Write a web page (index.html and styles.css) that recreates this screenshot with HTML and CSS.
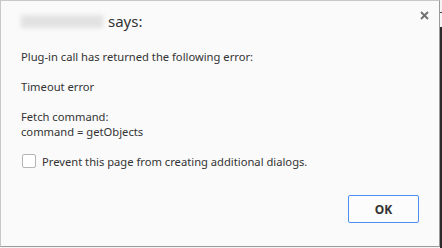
FILE: index.html
```html
<!DOCTYPE html>
<html>
<head>
<meta charset="utf-8">
<link rel="stylesheet" href="styles.css">
</head>
<body>
<div class="screen">
  <div class="dialog">
    <div class="title-row">
      <span class="origin" aria-hidden="true"></span>
      <span class="says">says:</span>
      <button class="close" aria-label="Close">
        <svg width="9" height="9" viewBox="0 0 9 9"><path d="M1 1 L8 8 M8 1 L1 8" stroke="#707070" stroke-width="1.9" fill="none"/></svg>
      </button>
    </div>
    <div class="message">
      <p class="line">Plug-in call has returned the following error:</p>
      <p class="line gap">Timeout error</p>
      <p class="line gap">Fetch command:</p>
      <p class="line">command = getObjects</p>
    </div>
    <label class="check-row">
      <span class="box"></span>
      <span class="check-label">Prevent this page from creating additional dialogs.</span>
    </label>
    <div class="actions">
      <button class="ok">OK</button>
    </div>
  </div>
  <div class="side"><span class="side-mark"></span></div>
</div>
</body>
</html>
```
FILE: styles.css
```css
html, body {
  margin: 0;
  padding: 0;
  background: #f4f4f4;
}
.screen {
  display: flex;
  width: 442px;
  height: 248px;
  overflow: hidden;
}
.dialog {
  box-sizing: border-box;
  width: 440px;
  height: 247px;
  background: #fafafa;
  border: 1px solid #9a9a9a;
  border-top-color: #c8c8c8;
  border-left-color: #c8c8c8;
  padding: 9px 20px 0 19px;
  font-family: "Noto Sans", "Open Sans", sans-serif;
  color: #333;
  display: flex;
  flex-direction: column;
}
.side {
  width: 2px;
  height: 248px;
  background: linear-gradient(#f4f4f4 0, #f4f4f4 27px, #2b2b2b 27px);
  position: relative;
}
.side-mark {
  position: absolute;
  left: 0;
  top: 12px;
  width: 2px;
  height: 1px;
  background: #444;
}
.title-row {
  display: flex;
  align-items: center;
  height: 22px;
  position: relative;
}
.origin {
  display: inline-block;
  width: 82px;
  height: 13px;
  margin: 0 5px 0 1px;
  background: #e2e2e2;
  filter: blur(2px);
}
.says {
  font-size: 15px;
  line-height: 22px;
  color: #333;
}
.close {
  position: absolute;
  right: -12px;
  top: -2px;
  width: 14px;
  height: 14px;
  padding: 0;
  border: 0;
  background: none;
  display: flex;
  align-items: center;
  justify-content: center;
}
.message {
  margin-top: 17px;
  padding-left: 1px;
}
.line {
  margin: 0;
  font-size: 11.2px;
  line-height: 15px;
}
.gap {
  margin-top: 15px;
}
.check-row {
  display: flex;
  align-items: center;
  margin-top: 14px;
  height: 16px;
  padding-left: 2px;
}
.box {
  box-sizing: border-box;
  width: 14px;
  height: 14px;
  border: 1px solid #b5b5b5;
  border-radius: 2px;
  background: #fff;
}
.check-label {
  margin-left: 6px;
  font-size: 11.2px;
  line-height: 15px;
}
.actions {
  display: flex;
  justify-content: flex-end;
  margin-top: 26px;
}
.ok {
  box-sizing: border-box;
  width: 71px;
  height: 28px;
  border: 1px solid #4d8ff0;
  border-radius: 2px;
  background: #fcfcfc;
  font-family: "Noto Sans", "Open Sans", sans-serif;
  font-weight: bold;
  font-size: 12px;
  color: #333;
  padding: 0;
}
```
